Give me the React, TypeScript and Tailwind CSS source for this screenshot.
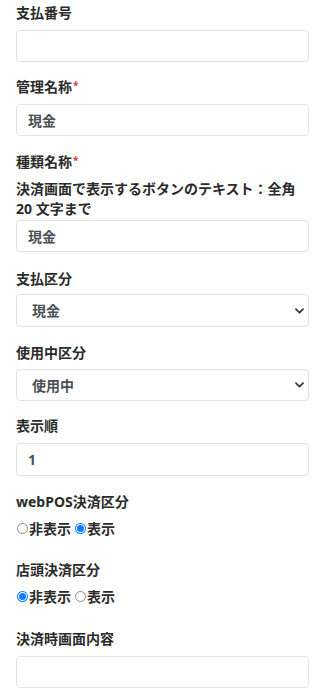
import React from "react";

const font = { fontFamily: '"Noto Sans", "Noto Sans CJK JP", sans-serif' };

function Label({ children, req }: { children: React.ReactNode; req?: boolean }) {
  return (
    <div className="h-[21px] text-[14px] leading-[21px] font-bold text-[#2b2b2b]">
      {children}
      {req && (
        <span className="inline-block text-[#e3342f] text-[10px] leading-[10px] align-top mt-[4px] ml-[1px]">*</span>
      )}
    </div>
  );
}

function TextBox({ value, h = 32 }: { value?: string; h?: number }) {
  return (
    <div
      className={`w-full border border-[#dee2e6] rounded-[4px] bg-white flex items-center pl-[11px] text-[14px] font-bold text-[#495057] ${h === 33 ? "h-[33px]" : "h-[32px]"}`}
    >
      {value}
    </div>
  );
}

function SelectBox({ value, h = 32 }: { value: string; h?: number }) {
  return (
    <div
      className={`w-full border border-[#dee2e6] rounded-[4px] bg-white flex items-center justify-between pl-[15px] pr-[4px] text-[14px] font-bold text-[#495057] ${h === 33 ? "h-[33px]" : "h-[32px]"}`}
    >
      <span>{value}</span>
      <svg width="9" height="6" viewBox="0 0 9 6">
        <path d="M1 1.2 L4.5 4.6 L8 1.2" fill="none" stroke="#343a40" strokeWidth="1.8" strokeLinecap="round" strokeLinejoin="round" />
      </svg>
    </div>
  );
}

function Radio({ checked }: { checked?: boolean }) {
  return checked ? (
    <span className="inline-flex w-[11px] h-[11px] rounded-full bg-[#0a7cff] items-center justify-center">
      <span className="w-[9px] h-[9px] rounded-full bg-white flex items-center justify-center">
        <span className="w-[7px] h-[7px] rounded-full bg-[#0a7cff]" />
      </span>
    </span>
  ) : (
    <span className="inline-block w-[11px] h-[11px] rounded-full border border-[#8a8a8a] bg-white" />
  );
}

function RadioRow({ first }: { first: boolean }) {
  return (
    <div className="h-[21px] flex items-center text-[14px] font-bold text-[#2b2b2b] leading-[21px]">
      <span className="ml-[1px] flex"><Radio checked={first} /></span>
      <span className="ml-[1px]">非表示</span>
      <span className="ml-[4px] flex"><Radio checked={!first} /></span>
      <span className="ml-[1px]">表示</span>
    </div>
  );
}

export default function App() {
  return (
    <div className="w-[326px] h-[700px] bg-white pl-[16px] pr-[17px] pt-[2px]" style={font}>
      <Label>支払番号</Label>
      <div className="mt-[7px]"><TextBox /></div>

      <div className="mt-[14px]"><Label req>管理名称</Label></div>
      <div className="mt-[7px]"><TextBox value="現金" /></div>

      <div className="mt-[15px]"><Label req>種類名称</Label></div>
      <div className="mt-[7px] text-[14px] leading-[20px] font-bold text-[#2b2b2b]">
        決済画面で表示するボタンのテキスト：全角20 文字まで
      </div>
      <div className="mt-[1px]"><TextBox value="現金" /></div>

      <div className="mt-[16px]"><Label>支払区分</Label></div>
      <div className="mt-[5px]"><SelectBox value="現金" h={33} /></div>

      <div className="mt-[15px]"><Label>使用中区分</Label></div>
      <div className="mt-[6px]"><SelectBox value="使用中" /></div>

      <div className="mt-[14px]"><Label>表示順</Label></div>
      <div className="mt-[7px]"><TextBox value="1" h={33} /></div>

      <div className="mt-[15px]"><Label>webPOS決済区分</Label></div>
      <div className="mt-[6px]"><RadioRow first={false} /></div>

      <div className="mt-[20px]"><Label>店頭決済区分</Label></div>
      <div className="mt-[6px]"><RadioRow first={true} /></div>

      <div className="mt-[21px]"><Label>決済時画面内容</Label></div>
      <div className="mt-[7px]"><TextBox /></div>
    </div>
  );
}
